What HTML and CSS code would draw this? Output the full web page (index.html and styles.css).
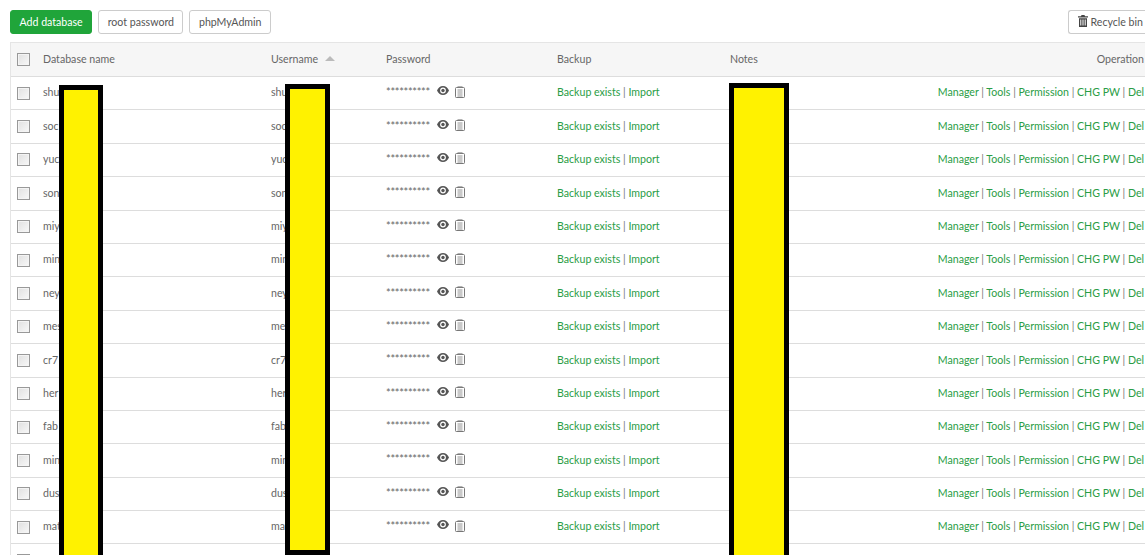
FILE: index.html
```html
<!DOCTYPE html>
<html lang="en">
<head>
<meta charset="utf-8">
<title>Databases</title>
<link rel="stylesheet" href="styles.css">
</head>
<body>
<svg class="defs" width="0" height="0" aria-hidden="true">
  <symbol id="eye" viewBox="0 0 12 9"><path fill="#555" d="M6 0C3.2 0 1.1 1.900 0 4.500 1.100 7.100 3.200 9 6 9s4.900-1.900 6-4.500C10.900 1.900 8.800 0 6 0zm0 7.400A2.900 2.900 0 1 1 6 1.600a2.900 2.900 0 0 1 0 5.800z"/><circle fill="#555" cx="6" cy="4.500" r="1.700"/></symbol>
  <symbol id="clip" viewBox="0 0 10 12"><path fill="none" stroke="#777" d="M1.500 1.500h7a1 1 0 0 1 1 1v8.200a.8.8 0 0 1-.8.800H1.300a.8.8 0 0 1-.8-.8V2.500a1 1 0 0 1 1-1z"/><path stroke="#888" stroke-width=".9" d="M2.500 .8h5M2.500 4h5M2.500 6h5M2.500 8h5M2.500 10h5"/></symbol>
</svg>
<main class="page">
  <div class="toolbar">
    <button class="btn btn-green">Add database</button>
    <button class="btn">root password</button>
    <button class="btn">phpMyAdmin</button>
    <button class="btn btn-bin"><svg class="bin" viewBox="0 0 10 12"><path fill="#444" d="M3.500 0h3l.5 1.200h3V2.500H0V1.200h3zM1 3.200h8V12H1zm1.300 1.300v6h1v-6zm2.200 0v6h1v-6zm2.200 0v6h1v-6z"/></svg>Recycle bin</button>
  </div>
  <div class="table">
    <div class="row head">
      <span class="check"></span><span class="cell">Database name</span>
      <span class="cell user-head">Username<i class="sort"></i></span>
      <span class="cell">Password</span><span class="cell">Backup</span><span class="cell notes">Notes</span><span class="cell op">Operation</span>
    </div>
    <div class="row"><span class="check"></span><span class="cell">shu</span><span class="cell">shu</span><span class="cell pw"><span class="stars">**********</span><svg class="eye"><use href="#eye"/></svg><svg class="clip"><use href="#clip"/></svg></span><span class="cell g">Backup exists <b>|</b> Import</span><span class="cell g op">Manager <b>|</b> Tools <b>|</b> Permission <b>|</b> CHG PW <b>|</b> Del</span></div>
    <div class="row"><span class="check"></span><span class="cell">soc</span><span class="cell">soc</span><span class="cell pw"><span class="stars">**********</span><svg class="eye"><use href="#eye"/></svg><svg class="clip"><use href="#clip"/></svg></span><span class="cell g">Backup exists <b>|</b> Import</span><span class="cell g op">Manager <b>|</b> Tools <b>|</b> Permission <b>|</b> CHG PW <b>|</b> Del</span></div>
    <div class="row"><span class="check"></span><span class="cell">yuc</span><span class="cell">yuc</span><span class="cell pw"><span class="stars">**********</span><svg class="eye"><use href="#eye"/></svg><svg class="clip"><use href="#clip"/></svg></span><span class="cell g">Backup exists <b>|</b> Import</span><span class="cell g op">Manager <b>|</b> Tools <b>|</b> Permission <b>|</b> CHG PW <b>|</b> Del</span></div>
    <div class="row"><span class="check"></span><span class="cell">son</span><span class="cell">son</span><span class="cell pw"><span class="stars">**********</span><svg class="eye"><use href="#eye"/></svg><svg class="clip"><use href="#clip"/></svg></span><span class="cell g">Backup exists <b>|</b> Import</span><span class="cell g op">Manager <b>|</b> Tools <b>|</b> Permission <b>|</b> CHG PW <b>|</b> Del</span></div>
    <div class="row"><span class="check"></span><span class="cell">miy</span><span class="cell">miy</span><span class="cell pw"><span class="stars">**********</span><svg class="eye"><use href="#eye"/></svg><svg class="clip"><use href="#clip"/></svg></span><span class="cell g">Backup exists <b>|</b> Import</span><span class="cell g op">Manager <b>|</b> Tools <b>|</b> Permission <b>|</b> CHG PW <b>|</b> Del</span></div>
    <div class="row"><span class="check"></span><span class="cell">min</span><span class="cell">min</span><span class="cell pw"><span class="stars">**********</span><svg class="eye"><use href="#eye"/></svg><svg class="clip"><use href="#clip"/></svg></span><span class="cell g">Backup exists <b>|</b> Import</span><span class="cell g op">Manager <b>|</b> Tools <b>|</b> Permission <b>|</b> CHG PW <b>|</b> Del</span></div>
    <div class="row"><span class="check"></span><span class="cell">ney</span><span class="cell">ney</span><span class="cell pw"><span class="stars">**********</span><svg class="eye"><use href="#eye"/></svg><svg class="clip"><use href="#clip"/></svg></span><span class="cell g">Backup exists <b>|</b> Import</span><span class="cell g op">Manager <b>|</b> Tools <b>|</b> Permission <b>|</b> CHG PW <b>|</b> Del</span></div>
    <div class="row"><span class="check"></span><span class="cell">mes</span><span class="cell">mes</span><span class="cell pw"><span class="stars">**********</span><svg class="eye"><use href="#eye"/></svg><svg class="clip"><use href="#clip"/></svg></span><span class="cell g">Backup exists <b>|</b> Import</span><span class="cell g op">Manager <b>|</b> Tools <b>|</b> Permission <b>|</b> CHG PW <b>|</b> Del</span></div>
    <div class="row"><span class="check"></span><span class="cell">cr7</span><span class="cell">cr7</span><span class="cell pw"><span class="stars">**********</span><svg class="eye"><use href="#eye"/></svg><svg class="clip"><use href="#clip"/></svg></span><span class="cell g">Backup exists <b>|</b> Import</span><span class="cell g op">Manager <b>|</b> Tools <b>|</b> Permission <b>|</b> CHG PW <b>|</b> Del</span></div>
    <div class="row"><span class="check"></span><span class="cell">her</span><span class="cell">her</span><span class="cell pw"><span class="stars">**********</span><svg class="eye"><use href="#eye"/></svg><svg class="clip"><use href="#clip"/></svg></span><span class="cell g">Backup exists <b>|</b> Import</span><span class="cell g op">Manager <b>|</b> Tools <b>|</b> Permission <b>|</b> CHG PW <b>|</b> Del</span></div>
    <div class="row"><span class="check"></span><span class="cell">fab</span><span class="cell">fab</span><span class="cell pw"><span class="stars">**********</span><svg class="eye"><use href="#eye"/></svg><svg class="clip"><use href="#clip"/></svg></span><span class="cell g">Backup exists <b>|</b> Import</span><span class="cell g op">Manager <b>|</b> Tools <b>|</b> Permission <b>|</b> CHG PW <b>|</b> Del</span></div>
    <div class="row"><span class="check"></span><span class="cell">min</span><span class="cell">min</span><span class="cell pw"><span class="stars">**********</span><svg class="eye"><use href="#eye"/></svg><svg class="clip"><use href="#clip"/></svg></span><span class="cell g">Backup exists <b>|</b> Import</span><span class="cell g op">Manager <b>|</b> Tools <b>|</b> Permission <b>|</b> CHG PW <b>|</b> Del</span></div>
    <div class="row"><span class="check"></span><span class="cell">dus</span><span class="cell">dus</span><span class="cell pw"><span class="stars">**********</span><svg class="eye"><use href="#eye"/></svg><svg class="clip"><use href="#clip"/></svg></span><span class="cell g">Backup exists <b>|</b> Import</span><span class="cell g op">Manager <b>|</b> Tools <b>|</b> Permission <b>|</b> CHG PW <b>|</b> Del</span></div>
    <div class="row"><span class="check"></span><span class="cell">mat</span><span class="cell">mat</span><span class="cell pw"><span class="stars">**********</span><svg class="eye"><use href="#eye"/></svg><svg class="clip"><use href="#clip"/></svg></span><span class="cell g">Backup exists <b>|</b> Import</span><span class="cell g op">Manager <b>|</b> Tools <b>|</b> Permission <b>|</b> CHG PW <b>|</b> Del</span></div>
    <div class="row"><span class="check"></span></div>
  </div>
  <div class="redact redact-a"></div>
  <div class="redact redact-b"></div>
  <div class="redact redact-c"></div>
</main>
</body>
</html>
```

FILE: styles.css
```css
html, body {
  margin: 0;
  height: 100%;
  overflow: hidden;
  background: #fff;
}
.defs { position: absolute; }
.page {
  position: relative;
  height: 555px;
  overflow: hidden;
  padding: 10px 0 0 10px;
  box-sizing: border-box;
  font: 10.6px/1 Lato, "Open Sans", sans-serif;
  color: #666;
}
.toolbar {
  display: flex;
  gap: 6px;
  height: 24px;
  margin-bottom: 8px;
  width: 1135px;
}
.btn {
  font: inherit;
  color: #555;
  height: 24px;
  padding: 0 8.5px;
  background: #fff;
  border: 1px solid #ccc;
  border-radius: 3px;
  box-sizing: border-box;
}
.btn-green {
  background: #20a53a;
  border-color: #20a53a;
  color: #fff;
}
.btn-bin {
  margin-left: auto;
  margin-right: -10px;
  width: 87px;
  display: flex;
  align-items: center;
  white-space: nowrap;
  border-right: 0;
  border-radius: 3px 0 0 3px;
}
.bin { width: 10px; height: 12px; margin-right: 3px; margin-top: -3px; }
.table {
  width: 1140px;
  border-top: 1px solid #e5e5e5;
  border-left: 1px solid #e5e5e5;
}
.row {
  display: grid;
  grid-template-columns: 32px 228px 115px 171px 173px 1fr;
  align-items: center;
  height: 33.4px;
  box-sizing: border-box;
  border-bottom: 1px solid #ddd;
}
.row.head {
  height: 34px;
  background: #f6f6f6;
}
.cell { margin-top: -1px; }
.check {
  width: 11px;
  height: 11px;
  margin-left: 6px;
  border: 1px solid #999;
  background: linear-gradient(135deg, #e0e0e0, #f8f8f8);
  box-shadow: inset 0 0 0 1px #f4f4f4;
}
.sort {
  display: inline-block;
  margin-left: 7px;
  border: 5px solid transparent;
  border-top: 0;
  border-bottom: 5px solid #bbb;
  vertical-align: 2px;
}
.user-head { white-space: nowrap; }
.pw { display: flex; align-items: center; margin-top: -3px; }
.stars { width: 44px; overflow: hidden; white-space: nowrap; font-size: 11px; letter-spacing: -.3px; }
.eye { width: 12px; height: 9px; margin-left: 7px; margin-bottom: 2px; }
.clip { width: 10px; height: 12px; margin-left: 6px; }
.g { color: #2a9d45; white-space: nowrap; }
.g b { font-weight: 400; color: #777; }
.notes { grid-column: 6; grid-row: 1; }
.op {
  grid-column: 6;
  grid-row: 1;
  justify-self: end;
  white-space: nowrap;
  padding-right: 7px;
}
.redact {
  position: absolute;
  top: 85px;
  bottom: -10px;
  background: #fff200;
  border: 5px solid #000;
  box-sizing: border-box;
}
.redact-a { left: 59px; width: 44px; }
.redact-b { left: 285px; width: 45px; top: 84px; bottom: 0; }
.redact-c { left: 729px; width: 60px; top: 83px; }
```
